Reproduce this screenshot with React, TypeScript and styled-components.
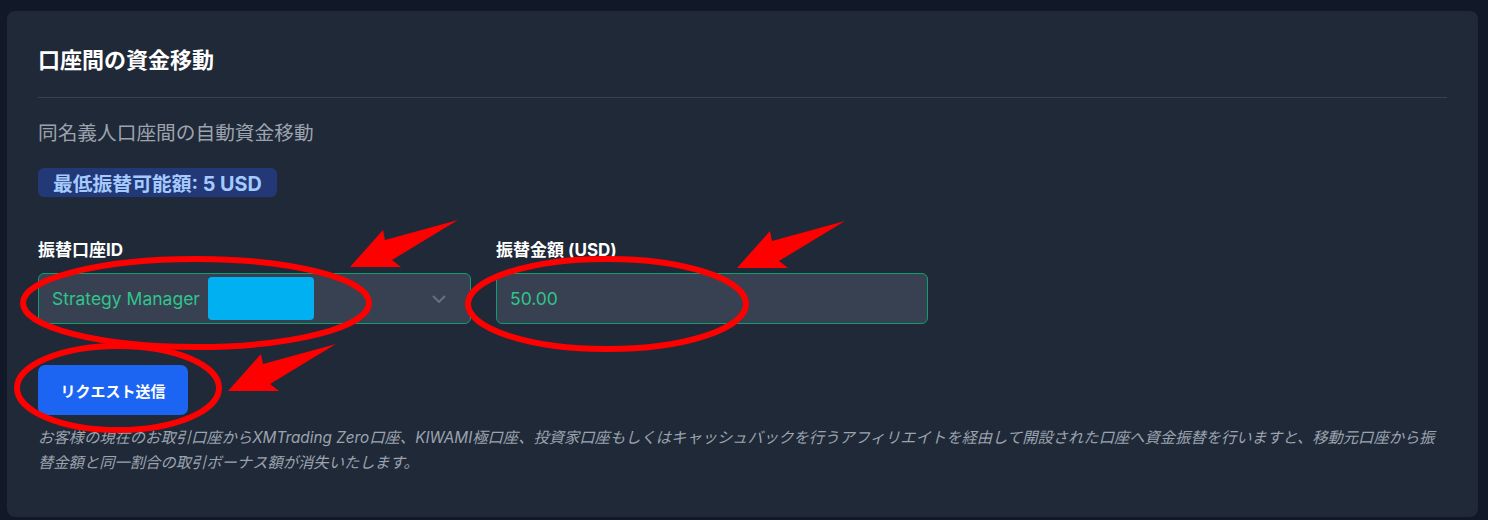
import styled, { createGlobalStyle } from "styled-components";

const GlobalStyle = createGlobalStyle`
  html, body {
    margin: 0;
    padding: 0;
    background: #111827;
  }
  body {
    font-family: Inter, "Noto Sans CJK JP", sans-serif;
  }
`;

const Page = styled.div`
  padding: 11px 10px 4px 7px;
  min-height: 520px;
  box-sizing: border-box;
`;

const Card = styled.section`
  position: relative;
  background: #1f2937;
  border-radius: 8px;
  padding: 34px 31px 42px 31px;
`;

const Title = styled.h2`
  margin: 0;
  font-size: 22px;
  line-height: 30px;
  font-weight: 700;
  color: #ffffff;
  padding-bottom: 22px;
  border-bottom: 1px solid #374151;
`;

const Subtitle = styled.p`
  margin: 21px 0 0;
  font-size: 19.7px;
  line-height: 28px;
  color: #9ca3af;
`;

const Badge = styled.span`
  display: inline-flex;
  align-items: center;
  margin-top: 21px;
  height: 29px;
  padding: 0 15px;
  border-radius: 6px;
  background: #233876;
  color: #a4cafe;
  font-size: 19.8px;
  font-weight: 700;
`;

const Fields = styled.div`
  display: grid;
  grid-template-columns: 433px 432px;
  column-gap: 25px;
  margin-top: 41px;
`;

const Field = styled.label`
  display: flex;
  flex-direction: column;
  gap: 11px;
`;

const Label = styled.span`
  font-size: 17px;
  line-height: 24px;
  font-weight: 700;
  color: #ffffff;
`;

const Control = styled.div`
  display: flex;
  align-items: center;
  height: 51px;
  box-sizing: border-box;
  padding: 0 13px;
  background: #374151;
  border: 1px solid #0e9f6e;
  border-radius: 6px;
  color: #31c48d;
  font-size: 17.5px;
`;

const Mask = styled.span`
  display: inline-block;
  width: 106px;
  height: 43px;
  margin-left: 8px;
  border-radius: 4px;
  background: #00b0f0;
`;

const Chevron = styled.svg`
  margin-left: auto;
  margin-right: 11px;
`;

const SubmitButton = styled.button`
  display: block;
  margin-top: 41px;
  width: 150px;
  height: 50px;
  border: none;
  border-radius: 7px;
  background: #1c64f2;
  color: #ffffff;
  font-family: Inter, "Noto Sans CJK JP", sans-serif;
  font-size: 15px;
  font-weight: 700;
`;

const Note = styled.p`
  margin: 10px 0 0;
  font-size: 15.3px;
  line-height: 25px;
  font-style: italic;
  color: #9ca3af;
`;

const Annotations = styled.svg`
  position: absolute;
  left: -7px;
  top: -11px;
  pointer-events: none;
  overflow: visible;
`;

const arrow = "M350 267 L383 230 L385 240 L458 220 L392 260 L401 267 Z";

export default function App() {
  return (
    <>
      <GlobalStyle />
      <Page>
        <Card>
          <Title>口座間の資金移動</Title>
          <Subtitle>同名義人口座間の自動資金移動</Subtitle>
          <Badge>最低振替可能額: 5 USD</Badge>
          <Fields>
            <Field>
              <Label>振替口座ID</Label>
              <Control>
                Strategy Manager
                <Mask />
                <Chevron width="14" height="8" viewBox="0 0 14 8">
                  <path d="M1 1 L7 7 L13 1" fill="none" stroke="#6b7280" strokeWidth="1.8" />
                </Chevron>
              </Control>
            </Field>
            <Field>
              <Label>振替金額 (USD)</Label>
              <Control>50.00</Control>
            </Field>
          </Fields>
          <SubmitButton>リクエスト送信</SubmitButton>
          <Note>
            お客様の現在のお取引口座からXMTrading Zero口座、KIWAMI極口座、投資家口座もしくはキャッシュバックを行うアフィリエイトを経由して開設された口座へ資金振替を行いますと、移動元口座から振
            <br />
            替金額と同一割合の取引ボーナス額が消失いたします。
          </Note>
          <Annotations width="1488" height="520" viewBox="0 0 1488 520">
            <g fill="none" stroke="#ff0000" strokeWidth="6">
              <ellipse cx="196" cy="303" rx="173" ry="44" />
              <ellipse cx="607" cy="304" rx="139" ry="45" />
              <ellipse cx="118" cy="388" rx="101" ry="42" />
            </g>
            <g fill="#ff0000">
              <path d={arrow} />
              <path d={arrow} transform="translate(387 1)" />
              <path d={arrow} transform="translate(-122 124)" />
            </g>
          </Annotations>
        </Card>
      </Page>
    </>
  );
}
